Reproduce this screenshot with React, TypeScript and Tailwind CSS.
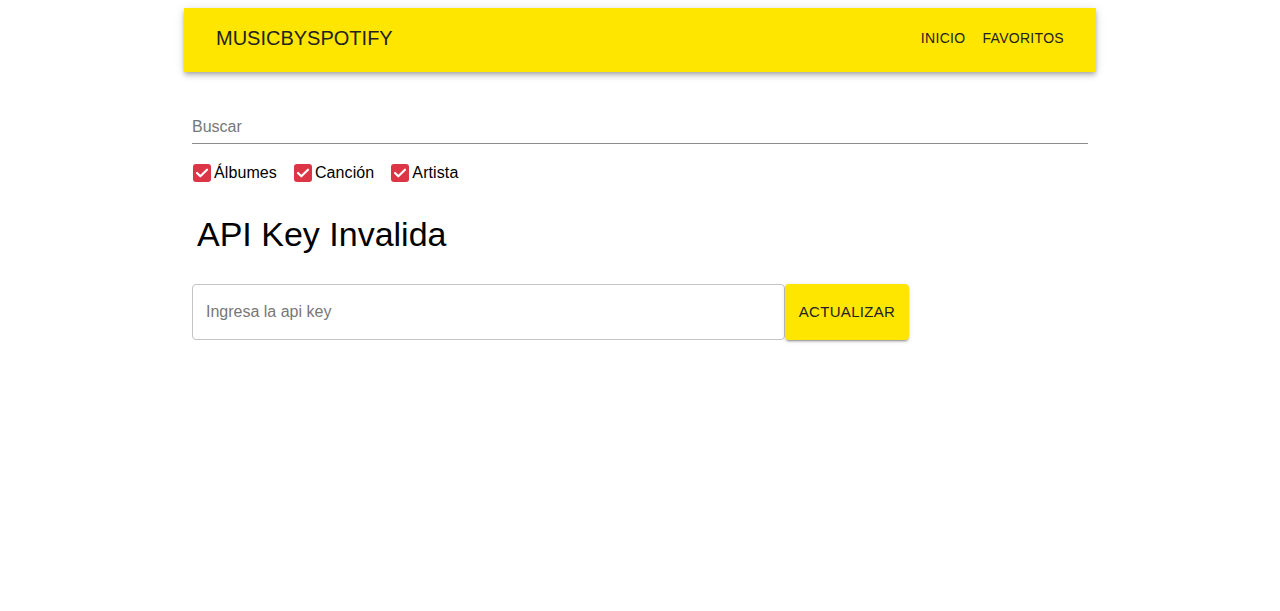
import React, { useState } from "react";

const Check = ({ label }: { label: string }) => {
  const [on, setOn] = useState(true);
  return (
    <label className="flex items-center cursor-pointer" onClick={() => setOn(!on)}>
      <span
        className={`flex h-[18px] w-[18px] items-center justify-center rounded-[3px] ${
          on ? "bg-[#dc3545]" : "border-2 border-gray-500"
        }`}
      >
        {on && (
          <svg viewBox="0 0 24 24" className="h-[16px] w-[16px]" fill="none" stroke="white" strokeWidth={3.2} strokeLinecap="round" strokeLinejoin="round">
            <path d="M4.5 12l5 5L19.5 7" />
          </svg>
        )}
      </span>
      <span className="ml-[3px] text-[16px] tracking-[0.1px] text-black">{label}</span>
    </label>
  );
};

export default function App() {
  const [query, setQuery] = useState("");
  const [apiKey, setApiKey] = useState("");

  return (
    <div className="min-h-[611px] bg-white font-['Liberation_Sans',Arial,sans-serif]">
      <div className="mx-auto w-[912px] pt-2">
        <header className="flex h-16 items-center justify-between bg-[#ffe600] px-8 pb-1 shadow-[0_2px_4px_-1px_rgba(0,0,0,0.2),0_4px_5px_0_rgba(0,0,0,0.14),0_1px_10px_0_rgba(0,0,0,0.12)]">
          <h1 className="text-[20px] text-[#222]">MUSICBYSPOTIFY</h1>
          <nav className="flex gap-[17px] text-[14px] tracking-[0.3px] text-[#222]">
            <a href="#">INICIO</a>
            <a href="#">FAVORITOS</a>
          </nav>
        </header>

        <main className="px-2">
          <div className="mt-[41px] border-b border-[#8c8c8c]">
            <input
              value={query}
              onChange={(e) => setQuery(e.target.value)}
              placeholder="Buscar"
              className="h-[30px] w-full bg-transparent pb-[2px] text-[16px] text-black placeholder:text-[#777] outline-none"
            />
          </div>

          <div className="mt-[17px] ml-[1px] flex gap-[17px]">
            <Check label="Álbumes" />
            <Check label="Canción" />
            <Check label="Artista" />
          </div>

          <h2 className="mt-[27px] ml-[5px] text-[34px] leading-[44px] text-black">API Key Invalida</h2>

          <div className="mt-[28px] flex">
            <input
              value={apiKey}
              onChange={(e) => setApiKey(e.target.value)}
              placeholder="Ingresa la api key"
              className="h-14 w-[593px] rounded-[4px] border border-[#c4c4c4] px-[13px] text-[16px] text-black placeholder:text-[#777] outline-none"
            />
            <button className="h-14 w-[124px] rounded-[4px] bg-[#ffe600] text-[15px] tracking-[0.3px] text-[#222] shadow-[0_3px_1px_-2px_rgba(0,0,0,0.2),0_2px_2px_0_rgba(0,0,0,0.14),0_1px_5px_0_rgba(0,0,0,0.12)]">
              ACTUALIZAR
            </button>
          </div>
        </main>
      </div>
    </div>
  );
}
